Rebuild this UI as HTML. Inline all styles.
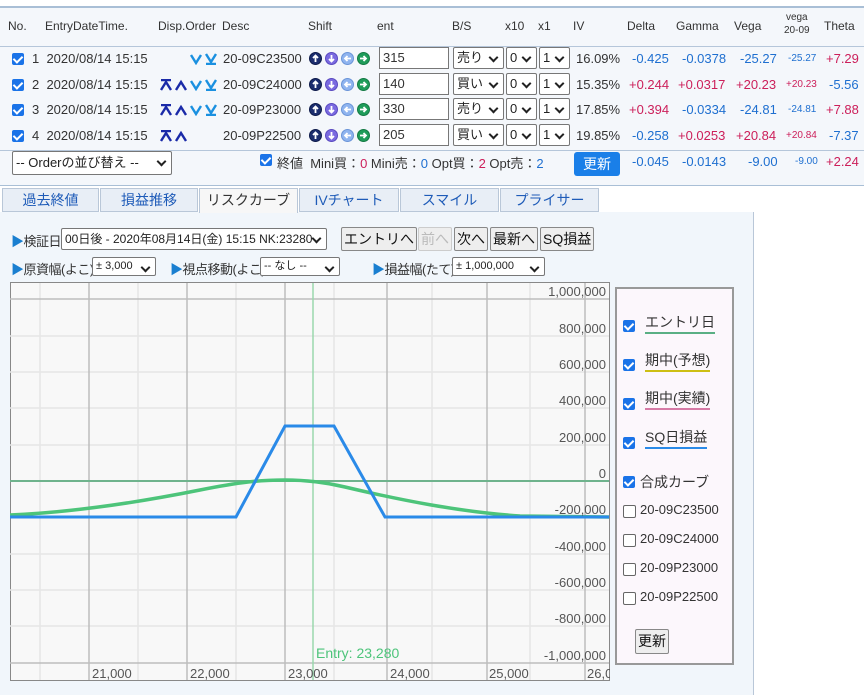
<!DOCTYPE html><html><head><meta charset="utf-8"><style>
body{margin:0;width:864px;height:695px;background:#fff;font-family:"Liberation Sans","Noto Sans CJK JP",sans-serif;font-size:13px;color:#333;position:relative;overflow:hidden}
.a{position:absolute;white-space:nowrap}
.top{position:absolute;left:0;top:6px;width:864px;height:177px;background:#f4f7fb;border-top:2px solid #a9bfd6;border-bottom:1px solid #a9bfd6}
.cb{position:absolute;width:12px;height:12px;background:#1a73e8;border-radius:2px}
.cb:after{content:"";position:absolute;left:3px;top:1px;width:4px;height:7px;border:solid #fff;border-width:0 2px 2px 0;transform:rotate(45deg)}
.ucb{position:absolute;width:11px;height:11px;border:1px solid #666;border-radius:2px;background:#fff}
.inp{position:absolute;height:22px;border:1px solid #777;background:#fff;box-sizing:border-box;padding-left:3px;line-height:20px;font-size:13px}
.sel{position:absolute;height:22px;border:1px solid #777;background:#fff;box-sizing:border-box;border-radius:2px;padding-left:3px;line-height:20px;font-size:13px;color:#222}
.sel:after{content:"";position:absolute;right:6px;top:6px;width:5px;height:5px;border:solid #222;border-width:0 2px 2px 0;transform:rotate(45deg)}
.b{color:#1e6fd0}.r{color:#cc1f5a}
.tab{position:absolute;top:188px;height:24px;background:#e8eef6;border:1px solid #b9c7d8;box-sizing:border-box;text-align:center;line-height:23px;color:#1e5bb8;font-size:14px}
.btn{position:absolute;height:24px;border:1px solid #888;background:#eee;border-radius:2px;box-sizing:border-box;line-height:22px;padding:0 2px;font-size:14px;color:#111}
.lg{position:absolute;font-size:13px;color:#333}
</style></head><body>
<svg width="0" height="0" style="position:absolute"><defs>
<g id="sh"><circle cx="6.5" cy="6.5" r="6" fill="#1b2d6e" stroke="#0d1a4a"/><path d="M6.5 10V3.5M4 6l2.5-2.5L9 6" stroke="#fff" stroke-width="1.8" fill="none"/>
<circle cx="22.5" cy="6.5" r="6" fill="#7a6ae0" stroke="#5a4ac0"/><path d="M22.5 3v6.5M20 7l2.5 2.5L25 7" stroke="#fff" stroke-width="1.8" fill="none"/>
<circle cx="38.5" cy="6.5" r="6" fill="#8fb4ef" stroke="#6a94d8"/><path d="M42 6.5h-6.5M38.5 4l-2.5 2.5 2.5 2.5" stroke="#fff" stroke-width="1.8" fill="none"/>
<circle cx="54.5" cy="6.5" r="6" fill="#1f9c5a" stroke="#147a44"/><path d="M51 6.5h6.5M54.5 4l2.5 2.5-2.5 2.5" stroke="#fff" stroke-width="1.8" fill="none"/></g>
<path id="ut" d="M1 1h10M1 11l5-8 5 8" stroke="#1a2aa8" stroke-width="2.4" fill="none"/>
<path id="u" d="M1 11l5-8 5 8" stroke="#1a2aa8" stroke-width="2.4" fill="none"/>
<path id="d" d="M1 2l5 8 5-8" stroke="#1a90e0" stroke-width="2.4" fill="none"/>
<path id="db" d="M1 1l5 8 5-8M1 11h10" stroke="#1a90e0" stroke-width="2.4" fill="none"/>
</defs></svg>
<div class="top"></div>
<div class="a" style="left:0;top:46px;width:864px;border-top:1px solid #b5c6da"></div>
<div class="a" style="left:0;top:150px;width:864px;border-top:1px solid #b5c6da"></div>
<div class="a" style="left:8px;top:19px;font-size:12px">No.</div>
<div class="a" style="left:45px;top:19px;font-size:12px">EntryDateTime.</div>
<div class="a" style="left:158px;top:19px;font-size:12px">Disp.Order</div>
<div class="a" style="left:222px;top:19px;font-size:12px">Desc</div>
<div class="a" style="left:308px;top:19px;font-size:12px">Shift</div>
<div class="a" style="left:377px;top:19px;font-size:12px">ent</div>
<div class="a" style="left:452px;top:19px;font-size:12px">B/S</div>
<div class="a" style="left:505px;top:19px;font-size:12px">x10</div>
<div class="a" style="left:538px;top:19px;font-size:12px">x1</div>
<div class="a" style="left:573px;top:19px;font-size:12px">IV</div>
<div class="a" style="left:627px;top:19px;font-size:12px">Delta</div>
<div class="a" style="left:676px;top:19px;font-size:12px">Gamma</div>
<div class="a" style="left:734px;top:19px;font-size:12px">Vega</div>
<div class="a" style="left:784px;top:11px;font-size:10px;line-height:13px;text-align:center">vega<br>20-09</div>
<div class="a" style="left:824px;top:19px;font-size:12px">Theta</div>

<div class="cb" style="left:12px;top:53px"></div><div class="a" style="left:32px;top:51px">1&nbsp; 2020/08/14 15:15</div>
<div class="cb" style="left:12px;top:79px"></div><div class="a" style="left:32px;top:77px">2&nbsp; 2020/08/14 15:15</div>
<div class="cb" style="left:12px;top:104px"></div><div class="a" style="left:32px;top:102px">3&nbsp; 2020/08/14 15:15</div>
<div class="cb" style="left:12px;top:130px"></div><div class="a" style="left:32px;top:128px">4&nbsp; 2020/08/14 15:15</div>
<svg class="a" style="left:160px;top:53px" width="60" height="12"><use href="#d" x="30"/><use href="#db" x="45"/></svg>
<svg class="a" style="left:160px;top:79px" width="60" height="12"><use href="#ut"/><use href="#u" x="15"/><use href="#d" x="30"/><use href="#db" x="45"/></svg>
<svg class="a" style="left:160px;top:104px" width="60" height="12"><use href="#ut"/><use href="#u" x="15"/><use href="#d" x="30"/><use href="#db" x="45"/></svg>
<svg class="a" style="left:160px;top:130px" width="60" height="12"><use href="#ut"/><use href="#u" x="15"/></svg>
<div class="a" style="left:223px;top:51px">20-09C23500</div>
<div class="a" style="left:223px;top:77px">20-09C24000</div>
<div class="a" style="left:223px;top:102px">20-09P23000</div>
<div class="a" style="left:223px;top:128px">20-09P22500</div>
<svg class="a" style="left:309px;top:52px" width="62" height="13"><use href="#sh"/></svg>
<svg class="a" style="left:309px;top:78px" width="62" height="13"><use href="#sh"/></svg>
<svg class="a" style="left:309px;top:103px" width="62" height="13"><use href="#sh"/></svg>
<svg class="a" style="left:309px;top:129px" width="62" height="13"><use href="#sh"/></svg>

<div class="inp" style="left:379px;top:47px;width:70px">315</div>
<div class="inp" style="left:379px;top:73px;width:70px">140</div>
<div class="inp" style="left:379px;top:98px;width:70px">330</div>
<div class="inp" style="left:379px;top:124px;width:70px">205</div>

<div class="sel" style="left:453px;top:47px;width:51px">売り</div><div class="sel" style="left:506px;top:47px;width:31px">0</div><div class="sel" style="left:539px;top:47px;width:31px">1</div>
<div class="sel" style="left:453px;top:73px;width:51px">買い</div><div class="sel" style="left:506px;top:73px;width:31px">0</div><div class="sel" style="left:539px;top:73px;width:31px">1</div>
<div class="sel" style="left:453px;top:98px;width:51px">売り</div><div class="sel" style="left:506px;top:98px;width:31px">0</div><div class="sel" style="left:539px;top:98px;width:31px">1</div>
<div class="sel" style="left:453px;top:124px;width:51px">買い</div><div class="sel" style="left:506px;top:124px;width:31px">0</div><div class="sel" style="left:539px;top:124px;width:31px">1</div>

<div class="a" style="left:576px;top:51px">16.09%</div>
<div class="a" style="left:576px;top:77px">15.35%</div>
<div class="a" style="left:576px;top:102px">17.85%</div>
<div class="a" style="left:576px;top:128px">19.85%</div>

<div class="a b" style="left:632px;top:51px">-0.425</div><div class="a b" style="left:682px;top:51px">-0.0378</div><div class="a b" style="left:740px;top:51px">-25.27</div><div class="a b" style="left:788px;top:53px;font-size:10px">-25.27</div><div class="a r" style="left:826px;top:51px">+7.29</div>
<div class="a r" style="left:629px;top:77px">+0.244</div><div class="a r" style="left:678px;top:77px">+0.0317</div><div class="a r" style="left:736px;top:77px">+20.23</div><div class="a r" style="left:786px;top:79px;font-size:10px">+20.23</div><div class="a b" style="left:829px;top:77px">-5.56</div>
<div class="a r" style="left:629px;top:102px">+0.394</div><div class="a b" style="left:682px;top:102px">-0.0334</div><div class="a b" style="left:740px;top:102px">-24.81</div><div class="a b" style="left:788px;top:104px;font-size:10px">-24.81</div><div class="a r" style="left:826px;top:102px">+7.88</div>
<div class="a b" style="left:632px;top:128px">-0.258</div><div class="a r" style="left:678px;top:128px">+0.0253</div><div class="a r" style="left:736px;top:128px">+20.84</div><div class="a r" style="left:786px;top:130px;font-size:10px">+20.84</div><div class="a b" style="left:829px;top:128px">-7.37</div>

<div class="sel" style="left:12px;top:151px;width:160px;height:24px;line-height:22px">-- Orderの並び替え --</div>
<div class="cb" style="left:260px;top:154px"></div>
<div class="a" style="left:277px;top:153px">終値&nbsp; Mini買：<span class="r">0</span> Mini売：<span class="b">0</span> Opt買：<span class="r">2</span> Opt売：<span class="b">2</span></div>
<div class="a" style="left:574px;top:152px;width:46px;height:24px;background:#1a7fe8;color:#fff;border-radius:3px;text-align:center;line-height:24px;font-size:14px">更新</div>
<div class="a b" style="left:632px;top:154px">-0.045</div><div class="a b" style="left:682px;top:154px">-0.0143</div><div class="a b" style="left:748px;top:154px">-9.00</div><div class="a b" style="left:795px;top:156px;font-size:10px">-9.00</div><div class="a r" style="left:826px;top:154px">+2.24</div>

<div class="a" style="left:0;top:212px;width:753px;height:483px;background:#f1f6fb;border-right:1px solid #b9c7d8"></div>
<div class="tab" style="left:2px;width:97px">過去終値</div>
<div class="tab" style="left:100px;width:98px">損益推移</div>
<div class="tab" style="left:199px;width:99px;background:#f7f7f7;color:#333;border-bottom:none;height:25px">リスクカーブ</div>
<div class="tab" style="left:299px;width:100px">IVチャート</div>
<div class="tab" style="left:400px;width:99px">スマイル</div>
<div class="tab" style="left:500px;width:99px">プライサー</div>

<div class="a" style="left:11px;top:231px;font-size:13px;letter-spacing:-0.5px"><span style="color:#1a7fd0">▶</span>検証日</div>
<div class="sel" style="left:61px;top:228px;width:266px;font-size:12px">00日後 - 2020年08月14日(金) 15:15 NK:23280</div>
<div class="btn" style="left:341px;top:227px">エントリへ</div>
<div class="btn" style="left:418px;top:227px;color:#bbb;border-color:#ccc">前へ</div>
<div class="btn" style="left:454px;top:227px">次へ</div>
<div class="btn" style="left:490px;top:227px">最新へ</div>
<div class="btn" style="left:540px;top:227px">SQ損益</div>
<div class="a" style="left:11px;top:259px;letter-spacing:-0.5px"><span style="color:#1a7fd0">▶</span>原資幅(よこ)</div>
<div class="sel" style="left:92px;top:257px;width:64px;height:19px;line-height:17px;font-size:11px">± 3,000</div>
<div class="a" style="left:170px;top:259px;letter-spacing:-0.5px"><span style="color:#1a7fd0">▶</span>視点移動(よこ)</div>
<div class="sel" style="left:260px;top:257px;width:80px;height:19px;line-height:17px;font-size:11px">-- なし --</div>
<div class="a" style="left:372px;top:259px;letter-spacing:-0.5px"><span style="color:#1a7fd0">▶</span>損益幅(たて)</div>
<div class="sel" style="left:452px;top:257px;width:93px;height:19px;line-height:17px;font-size:11px">± 1,000,000</div>

<svg class="a" style="left:10px;top:282px" width="600" height="399" viewBox="10 282 600 399">
<rect x="10.5" y="282.5" width="599" height="398" fill="#f8f8f8" stroke="#888"/>
<g stroke="#e6e6e6" stroke-width="1.5">
<line x1="40" y1="283" x2="40" y2="680"/><line x1="138" y1="283" x2="138" y2="680"/><line x1="236" y1="283" x2="236" y2="680"/><line x1="334" y1="283" x2="334" y2="680"/><line x1="432" y1="283" x2="432" y2="680"/><line x1="530" y1="283" x2="530" y2="680"/>
<line x1="10" y1="336" x2="609" y2="336"/><line x1="10" y1="372" x2="609" y2="372"/><line x1="10" y1="408" x2="609" y2="408"/><line x1="10" y1="445" x2="609" y2="445"/><line x1="10" y1="554" x2="609" y2="554"/><line x1="10" y1="590" x2="609" y2="590"/><line x1="10" y1="626" x2="609" y2="626"/>
</g>
<g stroke="#bdbdbd" stroke-width="1.5">
<line x1="89" y1="283" x2="89" y2="680"/><line x1="187" y1="283" x2="187" y2="680"/><line x1="285" y1="283" x2="285" y2="680"/><line x1="387" y1="283" x2="387" y2="680"/><line x1="487" y1="283" x2="487" y2="680"/><line x1="585" y1="283" x2="585" y2="680"/>
<line x1="10" y1="299" x2="609" y2="299"/><line x1="10" y1="663" x2="609" y2="663"/>
</g>
<line x1="10" y1="481" x2="609" y2="481" stroke="#6fb38d" stroke-width="2"/>
<line x1="313" y1="283" x2="313" y2="680" stroke="#9ad8ad" stroke-width="1.5"/>
<path d="M10,515 C80,512 150,500 200,490 C240,482 260,480 285,480 C300,480 320,481 345,487 C400,500 460,512 520,516 L609,517" fill="none" stroke="#4dc47a" stroke-width="3.5"/>
<path d="M10,517 L236,517 L285,426 L334,426 L385,517 L609,517" fill="none" stroke="#2a8ae8" stroke-width="3"/>
<g font-size="13" fill="#555" text-anchor="end" font-family="Liberation Sans,sans-serif">
<text x="606" y="296">1,000,000</text><text x="606" y="333">800,000</text><text x="606" y="369">600,000</text><text x="606" y="405">400,000</text><text x="606" y="442">200,000</text><text x="606" y="478">0</text><text x="606" y="514">-200,000</text><text x="606" y="551">-400,000</text><text x="606" y="587">-600,000</text><text x="606" y="623">-800,000</text><text x="606" y="660">-1,000,000</text>
</g>
<g font-size="13" fill="#555" font-family="Liberation Sans,sans-serif">
<text x="92" y="678">21,000</text><text x="190" y="678">22,000</text><text x="288" y="678">23,000</text><text x="390" y="678">24,000</text><text x="489" y="678">25,000</text><text x="587" y="678">26,0</text>
</g>
<text x="316" y="658" font-size="14" fill="#4dc47a" font-family="Liberation Sans,sans-serif">Entry: 23,280</text>
</svg>

<div class="a" style="left:615px;top:287px;width:119px;height:378px;background:#fcf7fc;border:2px solid #999;box-sizing:border-box"></div>
<div class="cb" style="left:623px;top:320px"></div><div class="lg" style="left:645px;top:312px;font-size:14px;border-bottom:2px solid #5aaf84">エントリ日</div>
<div class="cb" style="left:623px;top:359px"></div><div class="lg" style="left:645px;top:350px;font-size:14px;border-bottom:2px solid #cdbf14">期中(予想)</div>
<div class="cb" style="left:623px;top:398px"></div><div class="lg" style="left:645px;top:388px;font-size:14px;border-bottom:2px solid #d67aa6">期中(実績)</div>
<div class="cb" style="left:623px;top:437px"></div><div class="lg" style="left:645px;top:427px;font-size:14px;border-bottom:2px solid #2a8ae8">SQ日損益</div>
<div class="cb" style="left:623px;top:476px"></div><div class="lg" style="left:640px;top:472px;font-size:14px">合成カーブ</div>
<div class="ucb" style="left:623px;top:505px"></div><div class="lg" style="left:640px;top:502px">20-09C23500</div>
<div class="ucb" style="left:623px;top:534px"></div><div class="lg" style="left:640px;top:531px">20-09C24000</div>
<div class="ucb" style="left:623px;top:563px"></div><div class="lg" style="left:640px;top:560px">20-09P23000</div>
<div class="ucb" style="left:623px;top:592px"></div><div class="lg" style="left:640px;top:589px">20-09P22500</div>
<div class="btn" style="left:635px;top:629px;height:25px">更新</div>
</body></html>
